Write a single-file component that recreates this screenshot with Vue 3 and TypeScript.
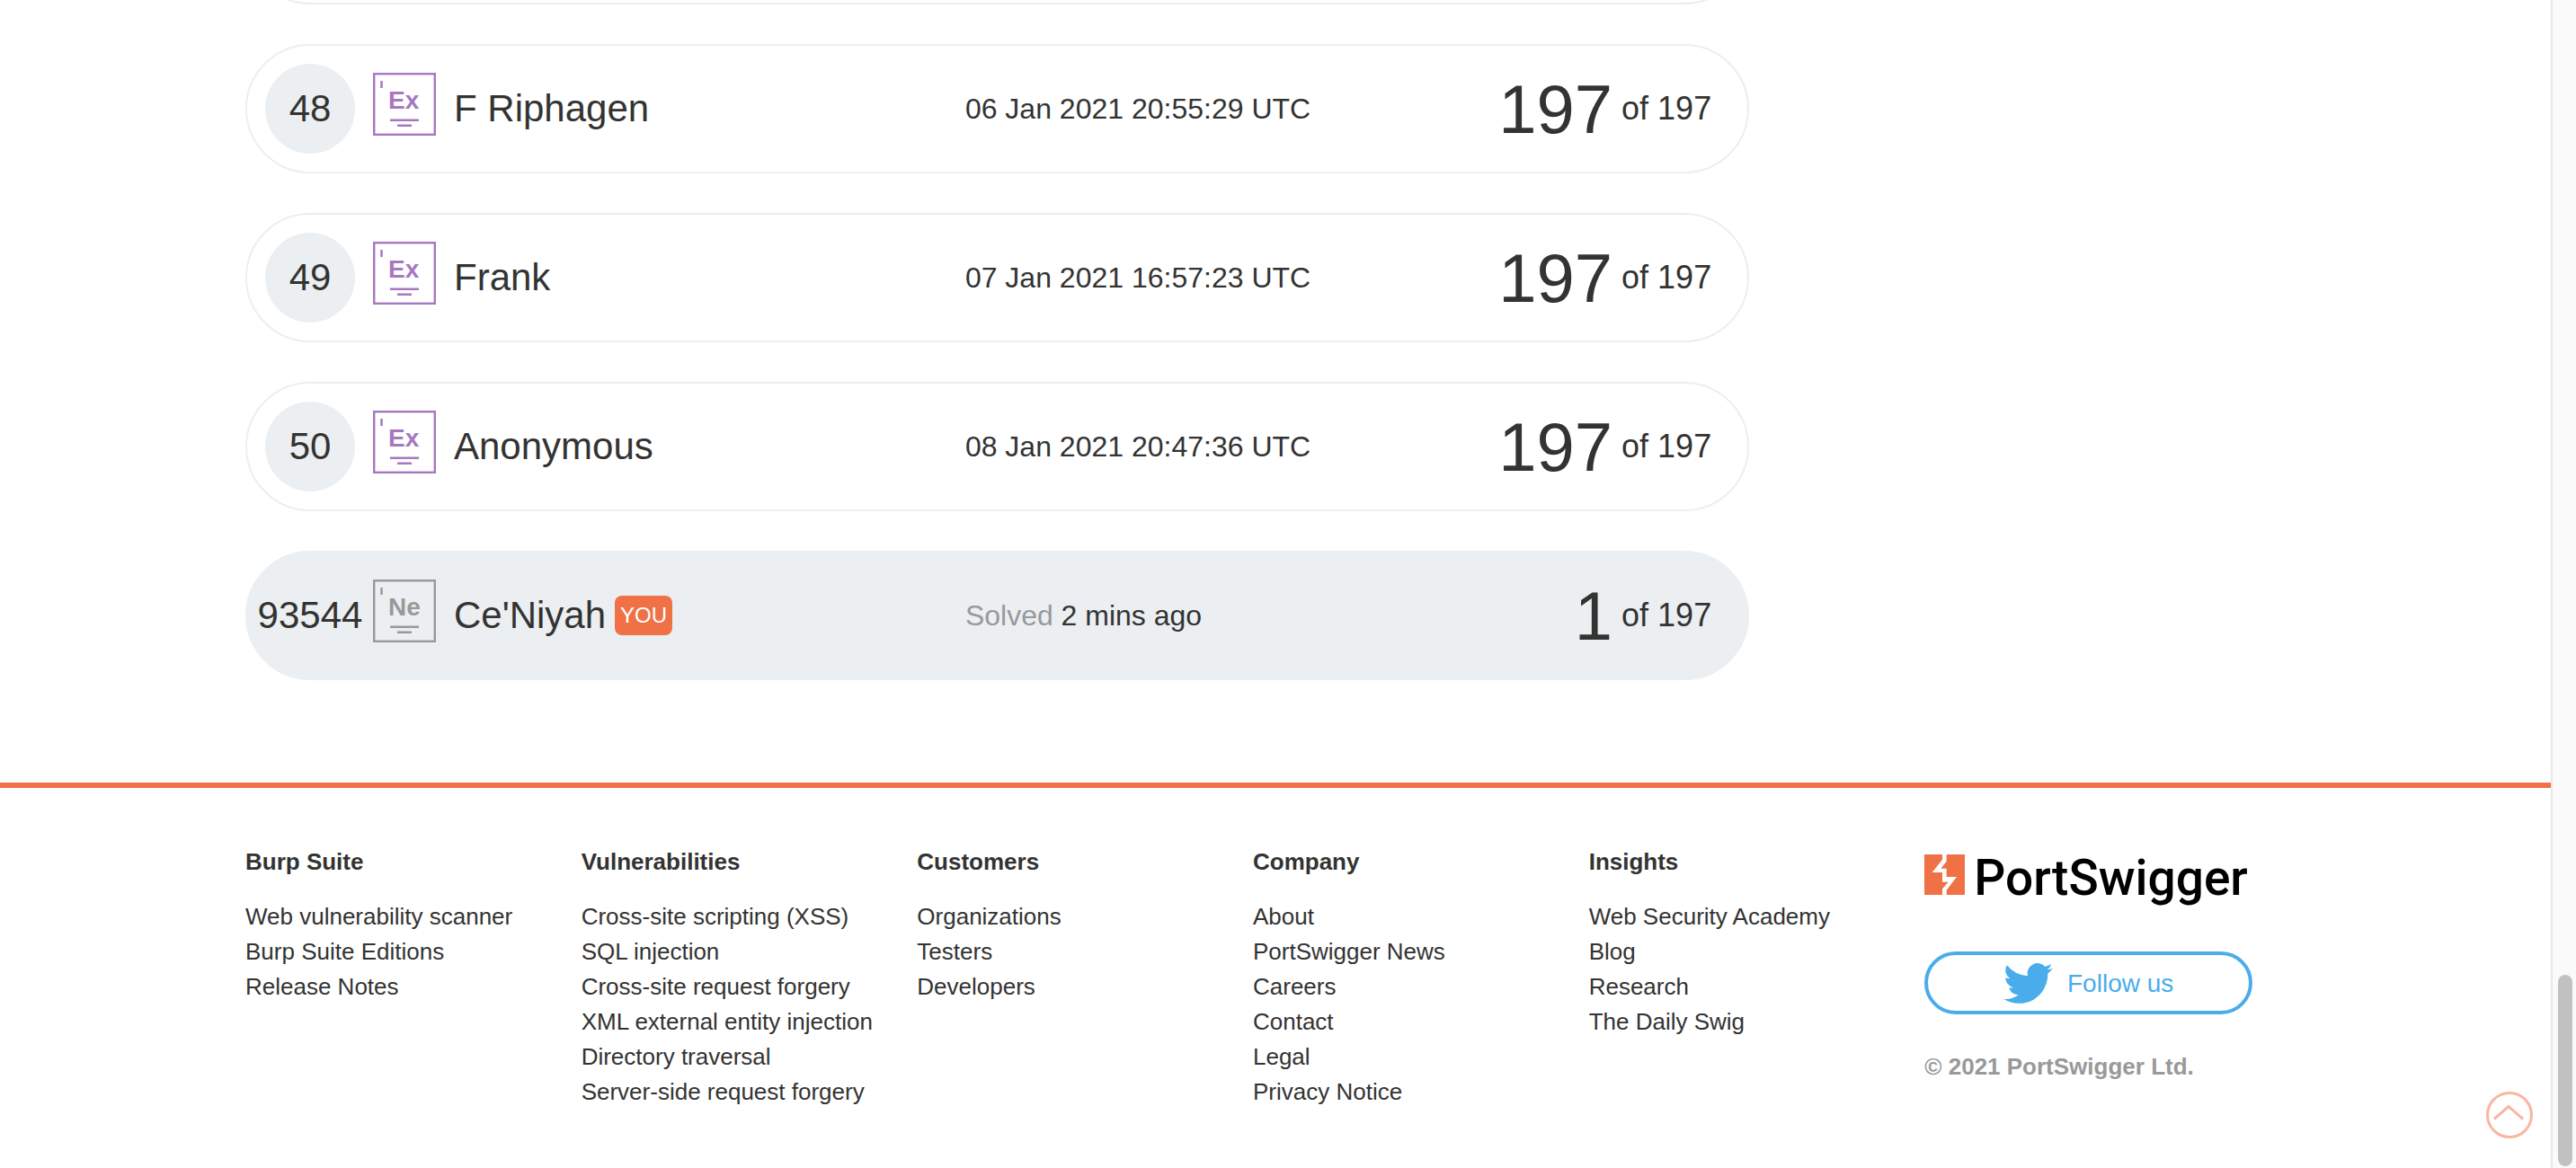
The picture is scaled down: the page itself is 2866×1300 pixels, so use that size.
<script setup lang="ts">
interface Entry {
  rank: number
  level: string
  name: string
  when: string
  solved: number
  you?: boolean
}

interface Column {
  title: string
  links: string[]
}

const total = 197

const entries: Entry[] = [
  { rank: 48, level: 'Ex', name: 'F Riphagen', when: '06 Jan 2021 20:55:29 UTC', solved: 197 },
  { rank: 49, level: 'Ex', name: 'Frank', when: '07 Jan 2021 16:57:23 UTC', solved: 197 },
  { rank: 50, level: 'Ex', name: 'Anonymous', when: '08 Jan 2021 20:47:36 UTC', solved: 197 },
  { rank: 93544, level: 'Ne', name: "Ce'Niyah", when: '2 mins ago', solved: 1, you: true },
]

const columns: Column[] = [
  { title: 'Burp Suite', links: ['Web vulnerability scanner', 'Burp Suite Editions', 'Release Notes'] },
  {
    title: 'Vulnerabilities',
    links: [
      'Cross-site scripting (XSS)',
      'SQL injection',
      'Cross-site request forgery',
      'XML external entity injection',
      'Directory traversal',
      'Server-side request forgery',
    ],
  },
  { title: 'Customers', links: ['Organizations', 'Testers', 'Developers'] },
  { title: 'Company', links: ['About', 'PortSwigger News', 'Careers', 'Contact', 'Legal', 'Privacy Notice'] },
  { title: 'Insights', links: ['Web Security Academy', 'Blog', 'Research', 'The Daily Swig'] },
]
</script>

<template>
  <div class="window">
    <div class="page">
      <main class="container">
        <div class="list">
          <div class="previous" aria-hidden="true"></div>
          <table class="board" aria-label="Hall of fame">
            <tbody>
              <tr v-for="e in entries" :key="e.rank" class="row" :class="{ you: e.you }">
                <td class="rank">{{ e.rank }}</td>
                <td class="level">
                  <svg width="70" height="70" viewBox="0 0 70 70">
                    <rect x="1.2" y="1.2" width="67.6" height="67.6" fill="none" stroke="currentColor" stroke-width="2.4" />
                    <path d="M9.5 9v8M19 52.7h32M27 58.7h16" fill="none" stroke="currentColor" stroke-width="2.5" />
                    <text x="17" y="40" fill="currentColor">{{ e.level }}</text>
                  </svg>
                </td>
                <td class="name">
                  <span>{{ e.name }}</span>
                  <span v-if="e.you" class="tag">YOU</span>
                </td>
                <td class="when"><span v-if="e.you" class="muted">Solved </span>{{ e.when }}</td>
                <td class="score">
                  <strong>{{ e.solved }}</strong>
                  <span>of {{ total }}</span>
                </td>
              </tr>
            </tbody>
          </table>
        </div>
      </main>

      <footer class="footer">
        <div class="container columns">
          <nav v-for="c in columns" :key="c.title" :aria-label="c.title">
            <h2>{{ c.title }}</h2>
            <ul>
              <li v-for="l in c.links" :key="l"><a href="#">{{ l }}</a></li>
            </ul>
          </nav>
          <div class="brand">
            <a class="logo" href="#" aria-label="PortSwigger home">
              <svg width="45" height="45" viewBox="0 0 135 135">
                <path fill="#f07146" d="M0 0H60V17L26 60H60V92H80L60 115V135H0Z" />
                <path fill="#f07146" d="M74 0H135V135H74V119L108 75H74V47H55L74 23Z" />
              </svg>
              <span>PortSwigger</span>
            </a>
            <a class="follow" href="#">
              <svg width="55" height="45" viewBox="0 0 24 19.5">
                <path
                  fill="currentColor"
                  d="M24 2.3a9.8 9.8 0 0 1-2.8.8A4.9 4.9 0 0 0 23.3.4a9.9 9.9 0 0 1-3.1 1.2A4.9 4.9 0 0 0 11.8 6.1 14 14 0 0 1 1.7.9a4.9 4.9 0 0 0 1.5 6.6 4.9 4.9 0 0 1-2.2-.6v.1a4.9 4.9 0 0 0 3.9 4.8 4.9 4.9 0 0 1-2.2.1 4.9 4.9 0 0 0 4.6 3.4A9.9 9.9 0 0 1 0 17.3a14 14 0 0 0 7.5 2.2c9.1 0 14-7.5 14-14v-.6A10 10 0 0 0 24 2.3z"
                />
              </svg>
              <span>Follow us</span>
            </a>
            <p class="copyright">© 2021 PortSwigger Ltd.</p>
          </div>
        </div>
      </footer>

      <button class="to-top" type="button" aria-label="Back to top">
        <svg width="52" height="52" viewBox="0 0 52 52" fill="none" stroke="#f7b7a2" stroke-width="3">
          <circle cx="26" cy="26" r="24.5" />
          <path d="M9 30.5 25 16.5 41 30.5" />
        </svg>
      </button>
    </div>
    <div class="scrollbar" aria-hidden="true"><div class="thumb"></div></div>
  </div>
</template>

<style>
body {
  margin: 0;
  background: #fff;
}
</style>

<style scoped>
.window {
  display: flex;
  min-height: 100vh;
  color: #333332;
  font-family: "Liberation Sans", Arial, sans-serif;
}

.page {
  position: relative;
  flex: 1;
  min-width: 0;
  overflow: hidden;
}

.container {
  box-sizing: border-box;
  max-width: 2292px;
  margin: 0 auto;
}

.list {
  width: 73%;
}

.previous {
  box-sizing: border-box;
  height: 144px;
  margin: -139px 0 44px;
  border: 2px solid #ebeff2;
  border-radius: 72px;
}

.board,
.board tbody {
  display: flex;
  flex-direction: column;
  gap: 44px;
}

.row {
  box-sizing: border-box;
  display: grid;
  grid-template-columns: 100px 70px 21fr 17fr 14fr;
  column-gap: 20px;
  align-items: center;
  height: 144px;
  padding: 0 40px 0 20px;
  border: 2px solid #ebeff2;
  border-radius: 72px;
}

.row.you {
  background: #ebeff2;
}

.row td {
  padding: 0;
  white-space: nowrap;
}

.rank {
  display: flex;
  align-items: center;
  justify-content: center;
  height: 100px;
  border-radius: 50%;
  background: #ebeff2;
  font-size: 42px;
}

.level {
  height: 80px;
  color: #a578bf;
}

.level svg {
  display: block;
}

.level text {
  font-size: 28px;
  font-weight: 700;
}

.you .level,
.muted {
  color: #999;
}

.name {
  display: flex;
  align-items: center;
  gap: 10px;
  font-size: 42px;
}

.tag {
  padding: 0 6px;
  border-radius: 8px;
  background: #f07146;
  color: #fff;
  font-size: 24px;
  line-height: 44px;
}

.when {
  font-size: 32px;
}

.score {
  display: flex;
  align-items: center;
  justify-content: flex-end;
  gap: 10px;
  font-size: 36px;
}

.score strong {
  font-size: 76px;
  font-weight: 400;
}

.footer {
  margin-top: 114px;
  padding: 63px 0 60px;
  border-top: 6px solid #f07146;
}

.columns {
  display: grid;
  grid-template-columns: repeat(6, minmax(0, 1fr));
  padding-right: 50px;
  font-size: 26px;
  line-height: 39px;
}

h2 {
  margin: 0 0 22px;
  font-size: 26px;
}

ul {
  margin: 0;
  padding: 0;
  list-style: none;
}

li {
  white-space: nowrap;
}

a {
  color: inherit;
  text-decoration: none;
}

.brand {
  display: flex;
  flex-direction: column;
  padding-right: 9px;
}

.logo {
  display: flex;
  align-items: baseline;
  gap: 10px;
  height: 74px;
  color: #000;
  font-family: Roboto, sans-serif;
  font-size: 55px;
  font-weight: 500;
  line-height: 74px;
}

.follow {
  box-sizing: border-box;
  display: flex;
  align-items: center;
  justify-content: center;
  gap: 16px;
  height: 70px;
  margin-top: 45px;
  border: 4px solid #4aaceb;
  border-radius: 35px;
  color: #4aaceb;
  font-size: 28px;
}

.copyright {
  margin: 39px 0 0;
  color: #999;
  font-weight: 700;
}

.to-top {
  position: absolute;
  right: 20px;
  bottom: 33px;
  padding: 0;
  border: 0;
  background: none;
  cursor: pointer;
}

.to-top svg {
  display: block;
}

.scrollbar {
  box-sizing: border-box;
  display: flex;
  align-items: flex-end;
  width: 28px;
  padding: 0 4px 2px 6px;
  border-left: 2px solid #e7e7e7;
  background: #fafafa;
}

.thumb {
  width: 16px;
  height: 213px;
  border-radius: 8px;
  background: #c1c1c1;
}
</style>
